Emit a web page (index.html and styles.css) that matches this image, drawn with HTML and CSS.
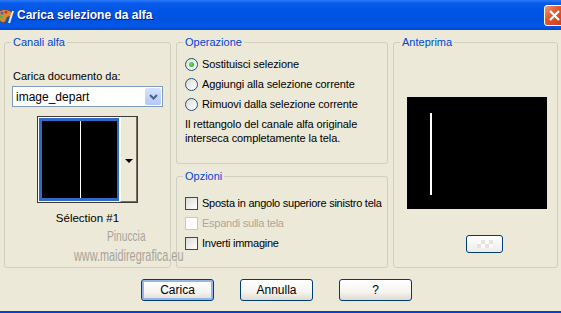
FILE: index.html
```html
<!DOCTYPE html>
<html lang="it">
<head>
    <meta charset="UTF-8" />
    <meta name="viewport" content="width=device-width, initial-scale=1.0" />
    <title>Carica selezione da alfa</title>
    <link rel="stylesheet" href="styles.css">
</head>
<body>
    <div class="window">
        <div class="titlebar">
            <svg class="app-icon" width="16" height="16" viewBox="0 0 16 16">
                <path d="M1 4 C4 0 12 1 14 5 C15 8 12 9 10 9 C8 9 9 12 7 14 C4 16 0 12 0 8 Z" fill="#d9893a" stroke="#7a4514" stroke-width="1"/>
                <circle cx="4" cy="5" r="1.5" fill="#2a6fe0"/>
                <circle cx="8" cy="4" r="1.5" fill="#e02a2a"/>
                <circle cx="3.5" cy="9" r="1.5" fill="#3fbf3f"/>
                <path d="M11 15 L15 3" stroke="#f4f0e0" stroke-width="2"/>
            </svg>
            <span class="title">Carica selezione da alfa</span>
            <span class="close">
                <svg width="13" height="13" viewBox="0 0 13 13"><path d="M2 2 L11 11 M11 2 L2 11" stroke="#fff" stroke-width="2.2"/></svg>
            </span>
        </div>

        <div class="client">
            <div class="panes">
                <fieldset class="group alpha">
                    <legend>Canali alfa</legend>
                    <div class="field-label">Carica documento da:</div>
                    <div class="select">
                        <span class="select-text">image_depart</span>
                        <span class="select-btn">
                            <svg width="9" height="6" viewBox="0 0 9 6"><path d="M1 1 L4.5 4.5 L8 1" fill="none" stroke="#4d6185" stroke-width="2"/></svg>
                        </span>
                    </div>
                    <div class="thumb-frame">
                        <div class="thumb">
                            <div class="thumb-img"><span class="thumb-line"></span></div>
                        </div>
                        <div class="thumb-drop"><span class="arrow"></span></div>
                    </div>
                    <div class="thumb-caption">Sélection #1</div>
                </fieldset>

                <div class="middle">
                    <fieldset class="group operation">
                        <legend>Operazione</legend>
                        <div class="option"><span class="radio checked"></span>Sostituisci selezione</div>
                        <div class="option"><span class="radio"></span>Aggiungi alla selezione corrente</div>
                        <div class="option"><span class="radio"></span>Rimuovi dalla selezione corrente</div>
                        <p class="note">Il rettangolo del canale alfa originale<br>interseca completamente la tela.</p>
                    </fieldset>

                    <fieldset class="group options">
                        <legend>Opzioni</legend>
                        <div class="option"><span class="check"></span>Sposta in angolo superiore sinistro tela</div>
                        <div class="option disabled"><span class="check"></span>Espandi sulla tela</div>
                        <div class="option"><span class="check"></span>Inverti immagine</div>
                    </fieldset>
                </div>

                <fieldset class="group preview">
                    <legend>Anteprima</legend>
                    <div class="preview-img"><span class="preview-line"></span></div>
                    <button class="mini-btn"><span class="checker"></span></button>
                </fieldset>
            </div>

            <div class="buttons">
                <button class="btn default">Carica</button>
                <button class="btn">Annulla</button>
                <button class="btn">?</button>
            </div>

            <div class="watermark">
                <div class="wm-name">Pinuccia</div>
                <div class="wm-site">www.maidiregrafica.eu</div>
            </div>
        </div>
        <div class="bottom-edge"></div>
    </div>
</body>
</html>
```

FILE: styles.css
```css
:root {
    --xp-face: #ece9d8;
    --xp-frame: #d0d0bf;
    --xp-legend: #0046d5;
    --xp-blue-border: #003c74;
    --xp-ctrl-border: #1c5180;
}

body {
    margin: 0;
    width: 561px;
    height: 313px;
    overflow: hidden;
    font-family: 'Liberation Sans', Arial, sans-serif;
    font-size: 11px;
    color: #000;
    background: var(--xp-face);
}

.window {
    display: flex;
    flex-direction: column;
    height: 313px;
}

.titlebar {
    height: 30px;
    display: flex;
    align-items: center;
    overflow: hidden;
    background: linear-gradient(#2b7cf6 0, #0a5cea 3px, #0055e6 10px, #0052e0 20px, #0558e8 26px, #0047cc 30px);
}

.app-icon {
    margin-left: -2px;
    margin-top: 1px;
}

.title {
    margin-left: 3px;
    color: #fff;
    font-weight: bold;
    font-size: 12px;
    text-shadow: 1px 1px #0a1883;
    flex: 1;
}

.close {
    width: 21px;
    height: 21px;
    margin-right: -4px;
    box-sizing: border-box;
    border: 1px solid #fff;
    border-radius: 3px;
    background: linear-gradient(135deg, #f09a7f 0, #e2582f 40%, #cc3b1b 100%);
    display: flex;
    align-items: center;
    justify-content: center;
}

.client {
    flex: 1;
    position: relative;
    padding: 6px 3px 0 4px;
}

.panes {
    display: grid;
    grid-template-columns: 167px 212px 165px;
    column-gap: 5px;
    height: 232px;
}

.group {
    margin: 0;
    padding: 0 6px;
    min-width: 0;
    border: 1px solid var(--xp-frame);
    border-radius: 3px;
    box-sizing: border-box;
}

.group legend {
    color: var(--xp-legend);
    padding: 0 2px;
    line-height: 13px;
}

.field-label {
    margin-top: 21px;
    line-height: 13px;
    padding-left: 2px;
}

.select {
    margin-top: 3px;
    margin-left: 1px;
    height: 21px;
    width: 151px;
    box-sizing: border-box;
    border: 1px solid #7f9db9;
    background: #fff;
    display: flex;
    align-items: center;
}

.select-text {
    flex: 1;
    padding-left: 3px;
    font-size: 12px;
}

.select-btn {
    width: 16px;
    height: 17px;
    margin-right: 1px;
    border-radius: 2px;
    background: linear-gradient(#d6e2fd, #b3c8f7);
    display: flex;
    align-items: center;
    justify-content: center;
}

.thumb-frame {
    margin: 9px auto 0;
    width: 101px;
    height: 87px;
    box-sizing: border-box;
    border: 1px solid #3c3c3c;
    display: flex;
}

.thumb {
    width: 82px;
    padding: 1px;
    box-sizing: border-box;
    background: #fff;
}

.thumb-img {
    height: 100%;
    box-sizing: border-box;
    border: 3px solid #316ac5;
    border-right-width: 2px;
    background: #000;
    position: relative;
}

.thumb-line {
    position: absolute;
    left: 38px;
    top: 0;
    bottom: 0;
    width: 1px;
    background: #fff;
}

.thumb-drop {
    flex: 1;
    border-left: 1px solid #fff;
    border-right: 1px solid #716f64;
    border-bottom: 1px solid #716f64;
    display: flex;
    align-items: center;
    justify-content: center;
    padding-top: 4px;
}

.arrow {
    width: 0;
    height: 0;
    border-left: 4px solid transparent;
    border-right: 4px solid transparent;
    border-top: 4px solid #000;
}

.thumb-caption {
    margin-top: 9px;
    text-align: center;
    line-height: 13px;
    font-size: 11.5px;
}

.middle {
    display: flex;
    flex-direction: column;
    gap: 6px;
}

.operation {
    height: 128px;
}

.options {
    height: 98px;
}

.option {
    height: 20px;
    display: flex;
    align-items: center;
    gap: 4px;
    font-size: 11px;
    letter-spacing: -0.1px;
    white-space: nowrap;
    padding-left: 2px;
}

.options .option {
    letter-spacing: -0.25px;
}

.operation .option:first-of-type {
    margin-top: 5px;
}

.options .option:first-of-type {
    margin-top: 10px;
}

.option.disabled {
    color: #aca899;
}

.radio {
    width: 13px;
    height: 13px;
    flex: none;
    box-sizing: border-box;
    border: 1px solid var(--xp-ctrl-border);
    border-radius: 50%;
    background: linear-gradient(135deg, #dcdcd7, #fff);
    display: flex;
    align-items: center;
    justify-content: center;
}

.radio.checked::after {
    content: "";
    width: 5px;
    height: 5px;
    border-radius: 50%;
    background: radial-gradient(circle at 40% 40%, #5ee85e, #21a121);
}

.check {
    width: 13px;
    height: 13px;
    flex: none;
    box-sizing: border-box;
    border: 1px solid var(--xp-ctrl-border);
    background: linear-gradient(135deg, #dcdcd7, #fff);
}

.disabled .check {
    border-color: #cac8bb;
    background: #fff;
}

.note {
    margin: 3px 0 0 2px;
    line-height: 14px;
    font-size: 11px;
    letter-spacing: -0.1px;
    white-space: nowrap;
}

.preview-img {
    margin: 48px 0 0 7px;
    width: 140px;
    height: 112px;
    background: #000;
    position: relative;
}

.preview-line {
    position: absolute;
    left: 23px;
    top: 16px;
    width: 2px;
    height: 82px;
    background: #fff;
}

.mini-btn {
    display: block;
    margin: 26px 0 0 66px;
    width: 37px;
    height: 18px;
    padding: 0;
    border: 1px solid var(--xp-blue-border);
    border-radius: 3px;
    background: linear-gradient(#fff, #ecebe6);
}

.checker {
    display: block;
    margin: 3px auto;
    width: 16px;
    height: 8px;
    background: repeating-conic-gradient(#e4e4e4 0 25%, #fafafa 0 50%) 0 0 / 8px 8px;
}

.buttons {
    display: flex;
    gap: 26px;
    padding-left: 137px;
    margin-top: 11px;
}

.btn {
    width: 73px;
    height: 22px;
    padding: 0;
    font-family: 'Liberation Sans', Arial, sans-serif;
    font-size: 12px;
    color: #000;
    border: 1px solid var(--xp-blue-border);
    border-radius: 3px;
    background: linear-gradient(#fff 0, #f5f4ef 60%, #dedbd0 100%);
}

.btn.default {
    box-shadow: inset 0 0 0 2px #97b4ea;
}

.watermark {
    position: absolute;
    left: 70px;
    top: 196px;
    color: #a7a49b;
    font-family: 'Liberation Sans', sans-serif;
    line-height: 20px;
    pointer-events: none;
    white-space: nowrap;
}

.wm-name {
    font-size: 15px;
    margin-left: 37px;
    transform: scaleX(0.68);
    transform-origin: left top;
}

.wm-site {
    font-size: 17px;
    margin-left: 4px;
    transform: scaleX(0.64);
    transform-origin: left top;
}

.bottom-edge {
    height: 2px;
    background: #0041d8;
}
```
